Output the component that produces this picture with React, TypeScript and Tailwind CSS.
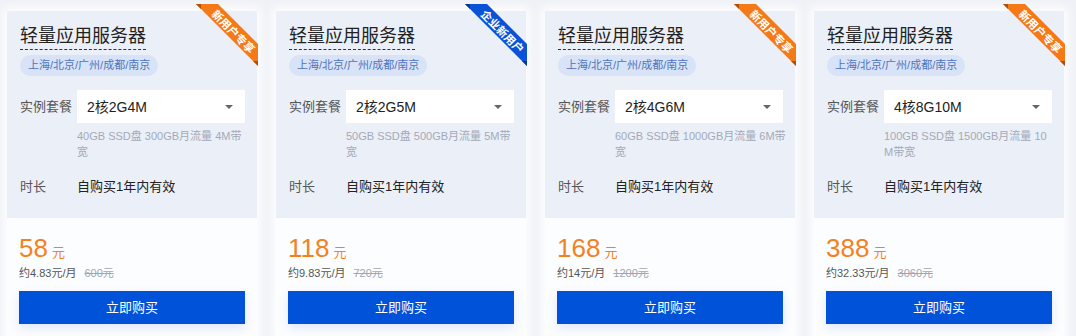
const plans = [
  { spec: '2核2G4M', desc: '40GB SSD盘 300GB月流量 4M带宽', price: '58', monthly: '约4.83元/月', original: '600元', tag: '新用户专享', blue: false },
  { spec: '2核2G5M', desc: '50GB SSD盘 500GB月流量 5M带宽', price: '118', monthly: '约9.83元/月', original: '720元', tag: '企业新用户', blue: true },
  { spec: '2核4G6M', desc: '60GB SSD盘 1000GB月流量 6M带宽', price: '168', monthly: '约14元/月', original: '1200元', tag: '新用户专享', blue: false },
  { spec: '4核8G10M', desc: '100GB SSD盘 1500GB月流量 10M带宽', price: '388', monthly: '约32.33元/月', original: '3060元', tag: '新用户专享', blue: false },
];

function Ribbon({ text, blue }: { text: string; blue: boolean }) {
  const main = blue ? '#0a52d6' : '#f57a17';
  const tail = blue ? '#06368f' : '#b24f06';
  return (
    <svg className="absolute left-[189px] top-[-7px] overflow-visible" width="63" height="63" viewBox="0 0 63 63">
      <polygon points="0,0 22,0 62,40 62,62" fill={main} />
      <polygon points="0,0 5,0 5,5" fill={tail} />
      <polygon points="57,57 62,57 62,62" fill={tail} />
      <text
        x="38"
        y="27"
        transform="rotate(45 38 27)"
        textAnchor="middle"
        dominantBaseline="central"
        fill="#fff"
        fontSize="11"
        fontWeight="700"
        style={{ fontFamily: '"Noto Sans CJK SC", sans-serif' }}
      >
        {text}
      </text>
    </svg>
  );
}

function PlanCard({ plan }: { plan: (typeof plans)[number] }) {
  return (
    <div className="relative w-[250px] shrink-0 bg-[#fcfdff] shadow-[0_0_10px_4px_rgba(255,255,255,0.95)]">
      <Ribbon text={plan.tag} blue={plan.blue} />

      {/* spec panel */}
      <div className="flex flex-col items-start bg-[#ebeff7] pl-[13px] pr-[12px] pt-[12px] pb-[21px]">
        <div className="border-b border-dashed border-[#333] text-[18px] leading-[26px] text-[#222]">
          轻量应用服务器
        </div>
        <div className="mt-[5px] h-[21px] rounded-full bg-[#d8e3f7] px-[8px] text-[11px] leading-[21px] text-[#4f74bd]">
          上海/北京/广州/成都/南京
        </div>

        <div className="mt-[14px] flex items-center">
          <div className="w-[57px] text-[13px] leading-[20px] text-[#555]">实例套餐</div>
          <div className="flex h-[33px] w-[168px] items-center justify-between bg-white pl-[10px] pr-[12px]">
            <span className="text-[14px] leading-[20px] text-[#222]">{plan.spec}</span>
            <span className="h-0 w-0 border-x-[4px] border-t-[4px] border-x-transparent border-t-[#666]" />
          </div>
        </div>
        <div className="mt-[5px] ml-[57px] w-[171px] break-all text-[11px] leading-[16px] text-[#a3aab7]">
          {plan.desc}
        </div>

        <div className="mt-[17px] flex items-center text-[13px] leading-[20px]">
          <div className="w-[57px] text-[#555]">时长</div>
          <div className="text-[#222]">自购买1年内有效</div>
        </div>
      </div>

      {/* price */}
      <div className="flex flex-col px-[12px] pt-[15px] pb-[22px]">
        <div className="flex h-[30px] items-baseline leading-[30px] text-[#f4811f]">
          <span className="text-[26px]">{plan.price}</span>
          <span className="ml-[4px] text-[13px]">元</span>
        </div>
        <div className="mt-[1px] flex h-[18px] items-center text-[11px] leading-[18px]">
          <span className="text-[#555]">{plan.monthly}</span>
          <span className="ml-[8px] text-[#a0a6b1] line-through">{plan.original}</span>
        </div>
        <button className="mt-[9px] h-[33px] w-full bg-[#0052d9] text-[13px] text-white shadow-[0_4px_10px_rgba(0,82,217,0.12)]">
          立即购买
        </button>
      </div>
    </div>
  );
}

export default function App() {
  return (
    <div className="min-h-[336px] w-[1076px] overflow-hidden bg-[#eef1f6] pl-[7px] pt-[11px] font-['Liberation_Sans','Noto_Sans_CJK_SC',sans-serif]">
      <div className="flex items-start gap-[19px]">
        {plans.map((p) => (
          <PlanCard key={p.spec} plan={p} />
        ))}
      </div>
    </div>
  );
}
